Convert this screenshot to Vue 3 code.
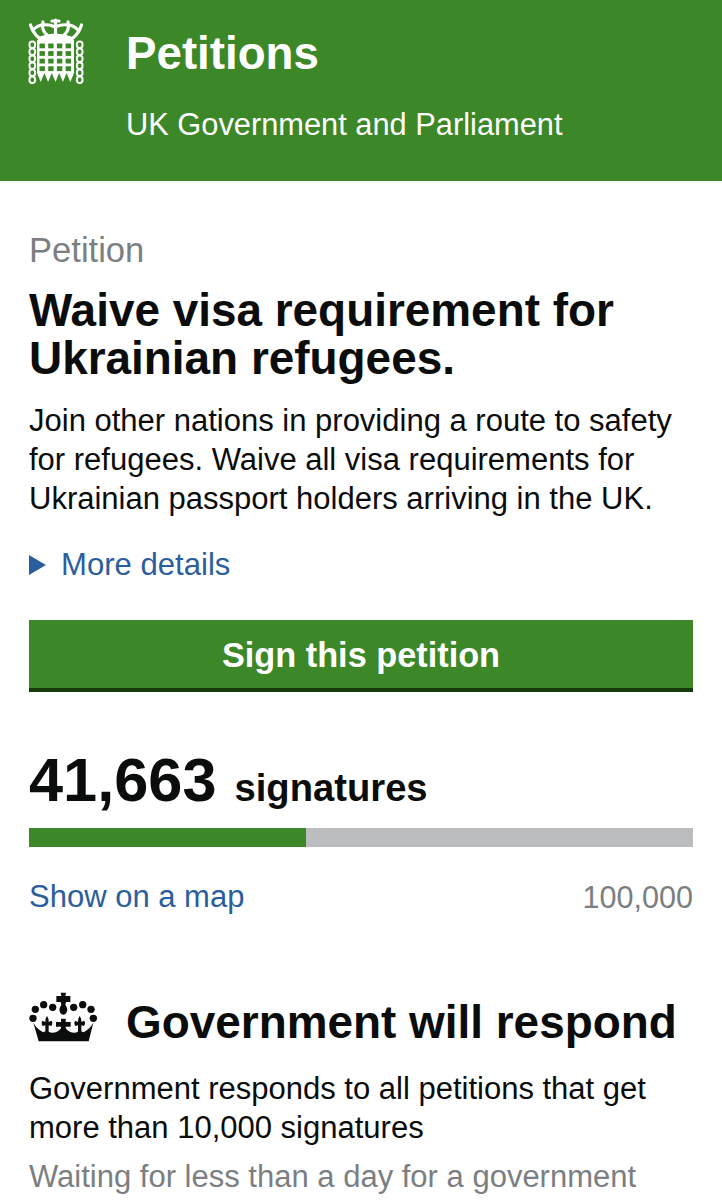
<script setup>
const gridRows = [0, 1, 2, 3]
const gridCols = [0, 1, 2, 3]
const chainLinks = [0, 1, 2, 3, 4, 5]
const pearls = [[55, 117], [62, 90], [87, 76], [114, 84], [177, 84], [204, 76], [229, 90], [236, 117]]
const percent = (41663 / 100000) * 100
</script>

<template>
  <div class="page">
    <header class="site-header">
      <svg class="portcullis" viewBox="0 0 56 68" aria-hidden="true">
        <g fill="none" stroke="#fff" stroke-width="2">
          <template v-for="i in chainLinks" :key="i">
            <rect x="1.500" :y="24.500 + i * 7" width="5.600" height="6.400" rx="2.600" />
            <rect x="48.900" :y="24.500 + i * 7" width="5.600" height="6.400" rx="2.600" />
          </template>
        </g>
        <path fill="#fff" d="M9 23h37v33l-3.700 9-3.700-9-3.700 9-3.700-9-3.700 9-3.700-9-3.700 9-3.700-9-3.700 9L9 56z" />
        <g fill="#3c8727">
          <template v-for="r in gridRows" :key="r">
            <rect v-for="c in gridCols" :key="c" :x="11.500 + c * 8.700" :y="26.500 + r * 7.600" width="5.400" height="4.800" />
          </template>
        </g>
        <g fill="none" stroke="#fff" stroke-width="3.200" stroke-linecap="round">
          <path d="M2.500 8Q5 16 11 21" />
          <path d="M53.500 8Q51 16 45 21" />
          <path d="M15 5Q13 13 19 18" />
          <path d="M40 5Q42 13 36 18" />
          <path d="M27.500 3V17" />
          <path d="M24 4H31" />
          <path d="M5 13Q10 8 15 8" />
          <path d="M50 13Q45 8 40 8" />
          <path d="M15 8Q21 7 27 10Q34 7 40 8" />
        </g>
        <path fill="#fff" d="M10 23V20Q27 13 45 20V23z" />
      </svg>
      <div class="site-title">
        <div class="brand">Petitions</div>
        <div class="tagline">UK Government and Parliament</div>
      </div>
    </header>

    <main class="content">
      <div class="eyebrow">Petition</div>
      <h1>Waive visa requirement for Ukrainian refugees.</h1>
      <p class="summary">Join other nations in providing a route to safety for refugees. Waive all visa requirements for Ukrainian passport holders arriving in the UK.</p>

      <a class="details">
        <span class="arrow"></span>
        More details
      </a>

      <button class="sign">Sign this petition</button>

      <div class="count">
        <span class="number">41,663</span>
        <span class="label">signatures</span>
      </div>
      <div class="bar">
        <div class="fill" :style="{ width: percent + '%' }"></div>
      </div>
      <div class="bar-foot">
        <a class="map-link">Show on a map</a>
        <span class="target">100,000</span>
      </div>

      <div class="respond-head">
        <svg class="crown" viewBox="40 35 215 155" aria-hidden="true">
          <g fill="#0b0c0c">
            <circle v-for="(p, i) in pearls" :key="i" :cx="p[0]" :cy="p[1]" r="11" />
            <path d="M138 40H154L152 50H167V68H154L152 76Q160 88 157 96Q154 106 146 106Q138 106 135 96Q132 88 140 76L138 68H125V50H140z" />
            <path d="M56 130Q66 148 84 158Q92 160 97 150Q102 160 112 160Q130 160 140 145L146 152L152 145Q162 160 180 160Q190 160 195 150Q200 160 208 158Q226 148 236 130L222 186H72z" />
            <path d="M97 110Q104 120 102 128L110 124Q116 130 110 140L102 138V155H92V138L84 140Q78 130 84 124L92 128Q90 120 97 110z" />
            <path d="M97 110Q104 120 102 128L110 124Q116 130 110 140L102 138V155H92V138L84 140Q78 130 84 124L92 128Q90 120 97 110z" transform="translate(98 0)" />
            <path d="M139 118H153V128H168V142H153V160H139V142H124V128H139z" />
          </g>
        </svg>
        <h2>Government will respond</h2>
      </div>
      <p class="respond-text">Government responds to all petitions that get more than 10,000 signatures</p>
      <p class="respond-wait">Waiting for less than a day for a government</p>
    </main>
  </div>
</template>

<style>
html, body {
  margin: 0;
  background: #fff;
}
</style>

<style scoped>
.page {
  height: 1200px;
  overflow: hidden;
  font-family: "Liberation Sans", Arial, sans-serif;
  color: #0b0c0c;
  background: #fff;
}

.site-header {
  display: flex;
  height: 181px;
  box-sizing: border-box;
  padding: 17px 0 0 28px;
  background: #3c8727;
  color: #fff;
}

.portcullis {
  width: 56px;
  height: 68px;
  flex: none;
}

.site-title {
  margin-left: 42px;
}

.brand {
  font-size: 45.7px;
  font-weight: 700;
  line-height: 50px;
  margin-top: 12px;
}

.tagline {
  font-size: 30.8px;
  line-height: 36px;
  margin-top: 28px;
}

.content {
  padding: 50px 29px 0;
}

.eyebrow {
  font-size: 34.6px;
  line-height: 38px;
  color: #7b7f82;
}

h1 {
  margin: 17px 0 0;
  font-size: 45.9px;
  line-height: 48px;
  font-weight: 700;
}

.summary {
  margin: 19px 0 0;
  font-size: 31px;
  line-height: 39px;
}

.details {
  display: flex;
  align-items: center;
  margin-top: 28px;
  font-size: 31.1px;
  line-height: 38px;
  color: #2b5e9e;
}

.arrow {
  width: 0;
  height: 0;
  margin-right: 15px;
  border-left: 17px solid #2b5e9e;
  border-top: 10px solid transparent;
  border-bottom: 10px solid transparent;
}

.sign {
  display: block;
  width: 100%;
  height: 72px;
  margin-top: 36px;
  padding: 3px 0 0;
  border: none;
  border-bottom: 4px solid #163a0c;
  background: #3c8727;
  color: #fff;
  font-family: inherit;
  font-size: 34.3px;
  font-weight: 700;
}

.count {
  display: flex;
  align-items: baseline;
  margin-top: 50px;
}

.number {
  font-size: 61.3px;
  line-height: 76px;
  font-weight: 700;
}

.label {
  margin-left: 18px;
  font-size: 38.2px;
  font-weight: 700;
}

.bar {
  height: 19px;
  margin-top: 10px;
  background: #bcbdbf;
}

.fill {
  height: 100%;
  background: #3c8727;
}

.bar-foot {
  display: flex;
  justify-content: space-between;
  margin-top: 31px;
  font-size: 31px;
  line-height: 38px;
}

.map-link {
  color: #2b5e9e;
}

.target {
  font-size: 30.6px;
  color: #7b7f82;
}

.respond-head {
  display: flex;
  align-items: center;
  margin-top: 75px;
}

.crown {
  width: 71.7px;
  height: 51.7px;
  margin: 0 0 10px -0.7px;
  flex: none;
}

h2 {
  margin: 0 0 0 26px;
  font-size: 45.9px;
  line-height: 52px;
  font-weight: 700;
  white-space: nowrap;
}

.respond-text {
  margin: 16px 0 0;
  font-size: 31px;
  line-height: 39px;
}

.respond-wait {
  margin: 10px 0 0;
  font-size: 31px;
  line-height: 39px;
  color: #7b7f82;
}
</style>
